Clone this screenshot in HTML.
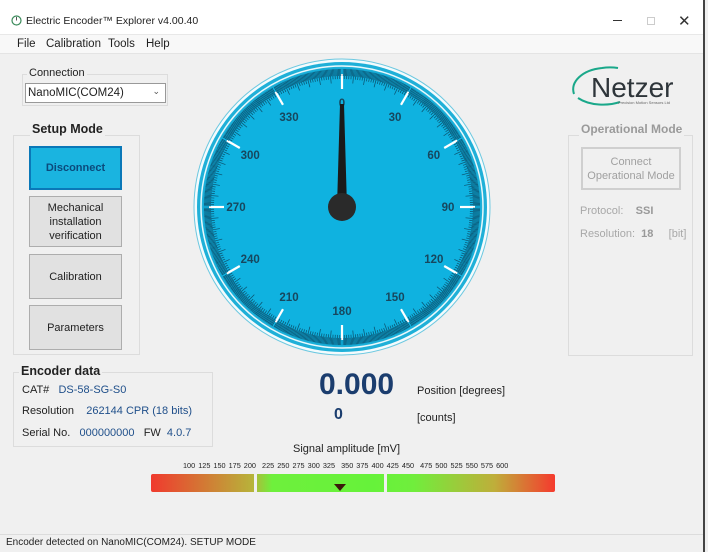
<!DOCTYPE html>
<html><head><meta charset="utf-8">
<style>
*{margin:0;padding:0;box-sizing:border-box}
body{width:708px;height:552px;overflow:hidden;background:#f0f0f0;font-family:"Liberation Sans",sans-serif;font-size:11px;color:#222;position:relative}
.a{position:absolute;white-space:nowrap}
.btn{position:absolute;background:#e1e1e1;border:1px solid #adadad;text-align:center;display:flex;align-items:center;justify-content:center;font-size:11px;line-height:14px;color:#222}
.grp{position:absolute;border:1px solid #dcdcdc}
</style></head><body>
<div class="a" style="left:0;top:0;width:703px;height:34px;background:#fff"></div>
<div class="a" style="left:0;top:34px;width:703px;height:20px;background:#f8f8f8;border-top:1px solid #e8e8e8;border-bottom:1px solid #e4e4e4"></div>
<div class="a" style="left:703px;top:0;width:2px;height:552px;background:#444"></div>
<svg class="a" style="left:11px;top:15px" width="11" height="11" viewBox="0 0 11 11"><circle cx="5.5" cy="5.5" r="4.5" fill="none" stroke="#3a8a5a" stroke-width="1.2"/><path d="M5.5 2 L5.5 5.5" stroke="#555" stroke-width="1"/></svg>
<div class="a" style="left:26px;top:15px;font-size:10.5px;color:#222">Electric Encoder™ Explorer v4.00.40</div>
<div class="a" style="left:613px;top:20px;width:9px;height:1px;background:#333"></div>
<div class="a" style="left:647px;top:17px;width:8px;height:8px;border:1px solid #ccc"></div>
<div class="a" style="left:678px;top:12px;font-size:15px;color:#333">✕</div>
<div class="a" style="left:17px;top:38px;font-size:11.5px">File</div>
<div class="a" style="left:46px;top:38px;font-size:11.5px">Calibration</div>
<div class="a" style="left:108px;top:38px;font-size:11.5px">Tools</div>
<div class="a" style="left:146px;top:38px;font-size:11.5px">Help</div>

<div class="grp" style="left:22px;top:74px;width:146px;height:32px"></div>
<div class="a" style="left:27px;top:67px;font-size:11px;background:#f0f0f0;padding:0 2px">Connection</div>
<div class="a" style="left:25px;top:83px;width:141px;height:20px;background:#fff;border:1px solid #999;font-size:11.5px;padding:3px 2px">NanoMIC(COM24)<span style="position:absolute;right:5px;top:2px;font-size:9px;color:#555">⌄</span></div>

<div class="grp" style="left:13px;top:135px;width:127px;height:220px"></div>
<div class="a" style="left:30px;top:122px;font-size:12.5px;font-weight:bold;background:#f0f0f0;padding:0 2px">Setup Mode</div>
<div class="btn" style="left:29px;top:146px;width:93px;height:44px;background:#1ab4e0;border:2px solid #0a78b8;color:#0b4a7c;font-weight:bold">Disconnect</div>
<div class="btn" style="left:29px;top:196px;width:93px;height:51px">Mechanical<br>installation<br>verification</div>
<div class="btn" style="left:29px;top:254px;width:93px;height:45px">Calibration</div>
<div class="btn" style="left:29px;top:305px;width:93px;height:45px">Parameters</div>

<div class="grp" style="left:13px;top:372px;width:200px;height:75px"></div>
<div class="a" style="left:19px;top:364px;font-size:12.5px;font-weight:bold;background:#f0f0f0;padding:0 2px">Encoder data</div>
<div class="a" style="left:22px;top:384px">CAT#&nbsp;&nbsp;&nbsp;<span style="color:#1f4f8a">DS-58-SG-S0</span></div>
<div class="a" style="left:22px;top:405px">Resolution&nbsp;&nbsp;&nbsp;&nbsp;<span style="color:#1f4f8a">262144 CPR (18 bits)</span></div>
<div class="a" style="left:22px;top:427px">Serial No.&nbsp;&nbsp;&nbsp;<span style="color:#1f4f8a">000000000</span>&nbsp;&nbsp;&nbsp;FW&nbsp;&nbsp;<span style="color:#1f4f8a">4.0.7</span></div>

<svg class="a" style="left:192px;top:57px" width="300" height="300" viewBox="-150 -150 300 300" id="g">
<circle r="148" fill="#f4fbfd" stroke="#6cc8e0" stroke-width="1"/>
<circle r="145" fill="#1fb0d8"/>
<circle r="141" fill="none" stroke="#e8f8fc" stroke-width="1.5"/>
<circle r="139" fill="#14acd8"/>
<circle r="137" fill="#0fb2e0"/>
<g id="t"></g>
<g font-family="Liberation Sans" font-size="11.5" font-weight="bold" fill="#17475e" text-anchor="middle" id="l"></g>
<polygon points="-2,-103 2,-103 5,0 -5,0" fill="#1a1a1a"/>
<circle r="14" fill="#2a2a2a"/>
</svg>
<script>
var t=document.getElementById('t'),l=document.getElementById('l'),s='';
for(var j=0;j<720;j++){var i=j/2,a=i*Math.PI/180,sn=Math.sin(a),cs=-Math.cos(a);
var r1=(j%10==0)?124:(j%2==0?128:131),r2=138;
if(j%60==0){s+='<line x1="'+(sn*118)+'" y1="'+(cs*118)+'" x2="'+(sn*133)+'" y2="'+(cs*133)+'" stroke="#fff" stroke-width="2.2"/>';}
else s+='<line x1="'+(sn*r1)+'" y1="'+(cs*r1)+'" x2="'+(sn*r2)+'" y2="'+(cs*r2)+'" stroke="#0c4e6a" stroke-width="0.7"/>';}
t.innerHTML=s;s='';
for(var d=0;d<360;d+=30){var a=d*Math.PI/180;s+='<text x="'+(Math.sin(a)*106)+'" y="'+(-Math.cos(a)*104+4)+'">'+d+'</text>';}
l.innerHTML=s;
</script>

<div class="a" style="left:319px;top:368px;font-size:30px;font-weight:bold;color:#1b3d6e">0.000</div>
<div class="a" style="left:334px;top:406px;font-size:16px;font-weight:bold;color:#1b3d6e">0</div>
<div class="a" style="left:417px;top:385px">Position [degrees]</div>
<div class="a" style="left:417px;top:412px">[counts]</div>

<div class="a" style="left:293px;top:443px;font-size:11px">Signal amplitude [mV]</div>
<div class="a" style="left:183px;top:461px;font-size:7.3px;word-spacing:1px">100 125 150 175 200&nbsp; 225 250 275 300 325&nbsp; 350 375 400 425 450&nbsp; 475 500 525 550 575 600</div>
<div class="a" style="left:151px;top:474px;width:404px;height:18px;border-radius:2px;background:linear-gradient(90deg,#f03a2e 0%,#b8b23a 25%,#6ef03c 30%,#66f23a 55%,#70ee3c 65%,#bfae3a 85%,#f53a2e 100%)"></div>
<div class="a" style="left:254px;top:472px;width:3px;height:21px;background:#f0f0f0"></div>
<div class="a" style="left:384px;top:472px;width:3px;height:21px;background:#f0f0f0"></div>
<div class="a" style="left:334px;top:484px;width:0;height:0;border-left:6px solid transparent;border-right:6px solid transparent;border-top:7px solid #3a1a0a"></div>

<div class="a" style="left:0;top:534px;width:703px;height:1px;background:#dcdcdc"></div>
<div class="a" style="left:6px;top:537px;font-size:10px">Encoder detected on NanoMIC(COM24). SETUP MODE</div>

<svg class="a" style="left:568px;top:60px" width="120" height="48" viewBox="0 0 120 48">
<path d="M6 34 C2 22 14 10 34 8 C40 7 44 7 50 8" fill="none" stroke="#1aa88a" stroke-width="2"/>
<path d="M10 38 C22 46 40 46 52 42" fill="none" stroke="#1aa88a" stroke-width="2"/>
<text x="23" y="37" font-family="Liberation Sans" font-size="28" fill="#2e353a">Netzer</text>
<text x="50" y="44" font-family="Liberation Sans" font-size="4" fill="#666">Precision Motion Sensors Ltd</text>
</svg>

<div class="grp" style="left:568px;top:135px;width:125px;height:221px"></div>
<div class="a" style="left:579px;top:122px;font-size:12px;font-weight:bold;color:#9a9a9a;background:#f0f0f0;padding:0 2px">Operational Mode</div>
<div class="btn" style="left:581px;top:147px;width:100px;height:43px;border:2px solid #cfcfcf;background:#f0f0f0;color:#a0a0a0">Connect<br>Operational Mode</div>
<div class="a" style="left:580px;top:205px;color:#a8a8a8">Protocol:&nbsp;&nbsp;&nbsp;&nbsp;<b style="color:#999">SSI</b></div>
<div class="a" style="left:580px;top:228px;color:#a8a8a8">Resolution:&nbsp;&nbsp;<b style="color:#999">18</b>&nbsp;&nbsp;&nbsp;&nbsp;&nbsp;[bit]</div>
</body></html>
